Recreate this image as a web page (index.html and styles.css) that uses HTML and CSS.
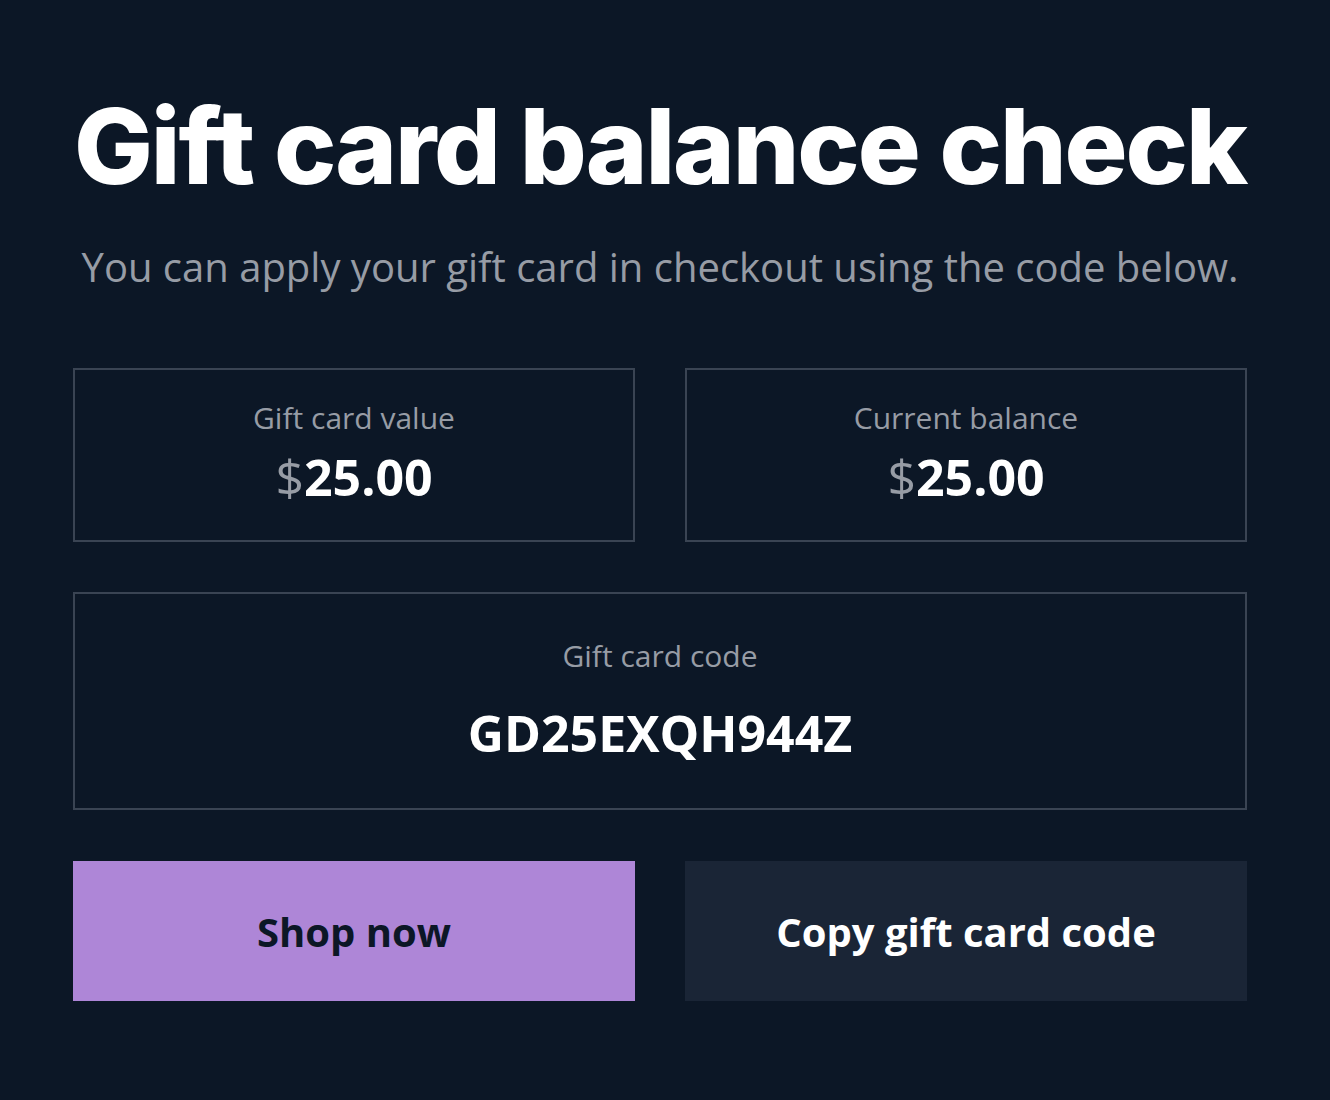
FILE: index.html
```html
<!DOCTYPE html>
<html lang="en">
<head>
<meta charset="utf-8">
<title>Gift card balance check</title>
<link rel="stylesheet" href="styles.css">
</head>
<body>
<main class="page">
  <h1 class="title">Gift card balance check</h1>
  <p class="subtitle">You can apply your gift card in checkout using the code below.</p>
  <div class="grid">
    <section class="card">
      <div class="label">Gift card value</div>
      <div class="amount"><span class="currency">$</span>25.00</div>
    </section>
    <section class="card">
      <div class="label">Current balance</div>
      <div class="amount"><span class="currency">$</span>25.00</div>
    </section>
    <section class="card card-wide">
      <div class="label">Gift card code</div>
      <div class="code">GD25EXQH944Z</div>
    </section>
    <a class="btn btn-primary" href="#">Shop now</a>
    <button class="btn btn-secondary" type="button">Copy gift card code</button>
  </div>
</main>
</body>
</html>
```

FILE: styles.css
```css
* { box-sizing: border-box; }
html, body { margin: 0; padding: 0; }
body {
  background: #0c1726;
  color: #ffffff;
  font-family: "Open Sans", "Liberation Sans", sans-serif;
  width: 1330px;
  min-height: 1100px;
}
.page {
  width: 1174px;
  margin-left: 73px;
  padding-top: 92px;
}
.title {
  margin: 0;
  font-family: Inter, "Liberation Sans", sans-serif;
  font-weight: 800;
  font-size: 105px;
  line-height: 108px;
  letter-spacing: -0.02em;
  text-align: center;
  white-space: nowrap;
}
.subtitle {
  margin: 40px 0 0;
  font-size: 40px;
  line-height: 54px;
  color: #979ca5;
  text-align: center;
  white-space: nowrap;
}
.grid {
  margin-top: 74px;
  display: grid;
  grid-template-columns: 1fr 1fr;
  column-gap: 50px;
  row-gap: 50px;
}
.card {
  border: 2px solid #3a4453;
  height: 174px;
  display: flex;
  flex-direction: column;
  align-items: center;
  padding-top: 28px;
}
.card-wide {
  grid-column: 1 / span 2;
  height: 218px;
  padding-top: 42px;
}
.label {
  font-size: 30px;
  line-height: 40px;
  color: #979ca5;
}
.amount {
  margin-top: 9px;
  font-size: 50px;
  line-height: 60px;
  font-weight: 700;
  color: #ffffff;
}
.currency { color: #979ca5; font-weight: 400; }
.code {
  margin-top: 25px;
  font-size: 50px;
  line-height: 64px;
  font-weight: 700;
}
.btn {
  display: flex;
  align-items: center;
  justify-content: center;
  height: 140px;
  border: none;
  margin: 1px 0 0;
  font-family: "Open Sans", "Liberation Sans", sans-serif;
  font-weight: 700;
  font-size: 40px;
  text-decoration: none;
  cursor: pointer;
}
.btn-primary { background: #ae86d7; color: #0c1726; }
.btn-secondary { background: #1a2536; color: #ffffff; }
```
